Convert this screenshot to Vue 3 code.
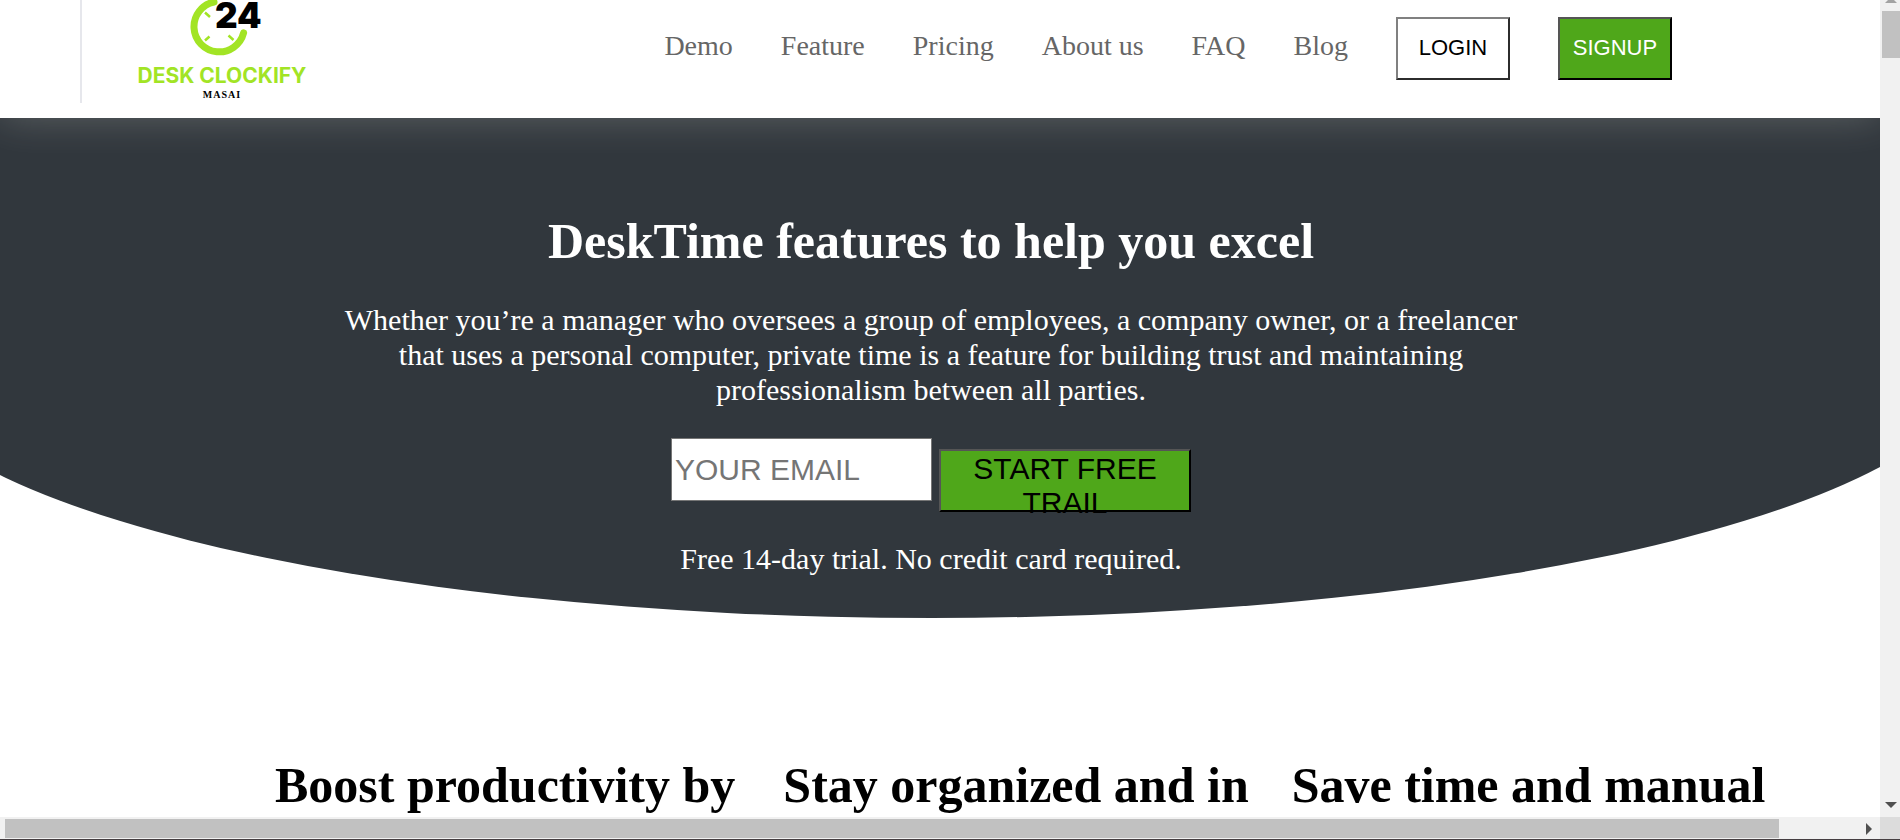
<script setup>
const links = ['Demo', 'Feature', 'Pricing', 'About us', 'FAQ', 'Blog']
const benefits = ['Boost productivity by', 'Stay organized and in', 'Save time and manual']
</script>

<template>
  <div class="window">
    <div class="page">
      <header class="header">
        <a class="brand" href="#" aria-label="Desk Clockify home">
          <svg class="logo" width="230" height="103" viewBox="0 0 230 103">
            <path d="M134 2A25.2 25.2 0 1 0 163.600 32.900" fill="none" stroke="#a2e425" stroke-width="7" stroke-linecap="round" />
            <path d="M125 12.500l5 4.500M129.500 36.500l-4.500 4M148.500 35.500l5 4.500" fill="none" stroke="#a2e425" stroke-width="2.500" />
            <text class="logo-number" x="135" y="28">24</text>
            <text class="logo-name" x="142" y="83" text-anchor="middle">DESK CLOCKIFY</text>
            <text class="logo-sub" x="142" y="98" text-anchor="middle">MASAI</text>
          </svg>
        </a>
        <nav class="nav">
          <a v-for="link in links" :key="link" class="link" href="#">{{ link }}</a>
          <button class="btn login" type="button">LOGIN</button>
          <button class="btn signup" type="button">SIGNUP</button>
        </nav>
      </header>

      <main>
        <section class="hero">
          <h1>DeskTime features to help you excel</h1>
          <p class="lead">
            Whether you’re a manager who oversees a group of employees, a company owner, or a freelancer
            that uses a personal computer, private time is a feature for building trust and maintaining
            professionalism between all parties.
          </p>
          <form class="trial" @submit.prevent>
            <input class="email" type="email" placeholder="YOUR EMAIL" aria-label="Your email" />
            <button class="start" type="submit">START FREE TRAIL</button>
          </form>
          <p class="note">Free 14-day trial. No credit card required.</p>
        </section>

        <section class="benefits">
          <h2 v-for="benefit in benefits" :key="benefit">{{ benefit }}</h2>
        </section>
      </main>
    </div>

    <div class="bar-y" aria-hidden="true">
      <svg class="arrow-up" width="12" height="6" viewBox="0 0 12 6"><path d="M0 6L6 0l6 6z" fill="#a3a3a3" /></svg>
      <div class="thumb-y"></div>
      <svg class="arrow-down" width="12" height="6" viewBox="0 0 12 6"><path d="M0 0h12L6 6z" fill="#505050" /></svg>
    </div>
    <div class="bar-x" aria-hidden="true">
      <div class="thumb-x"></div>
      <svg width="6" height="12" viewBox="0 0 6 12"><path d="M0 0l6 6-6 6z" fill="#505050" /></svg>
    </div>
    <div class="corner"></div>
  </div>
</template>

<style>
body {
  margin: 0;
}
</style>

<style scoped>
.window {
  display: grid;
  grid-template-columns: minmax(0, 1fr) 20px;
  grid-template-rows: minmax(0, 1fr) 22px;
  height: 100vh;
  box-sizing: border-box;
  border-bottom: 1px solid #453e41;
  background: #fff;
  font-family: "Liberation Serif", "Times New Roman", serif;
  overflow: hidden;
}

.page {
  overflow: hidden;
}

.header {
  position: relative;
  z-index: 1;
  display: flex;
  justify-content: space-between;
  align-items: flex-start;
  height: 118px;
  padding: 0 208px 0 80px;
  box-sizing: border-box;
  box-shadow: 0 0 40px rgba(255, 255, 240, 0.22);
}

.brand {
  display: block;
  border-left: 2px solid #e6e7ec;
}

.logo {
  display: block;
  margin-left: -2px;
}

.logo-number {
  font: 900 35px Inter, sans-serif;
}

.logo-name {
  font: 700 21px Inter, sans-serif;
  fill: #a2e425;
}

.logo-sub {
  font: 700 10px "Liberation Serif", serif;
  letter-spacing: 1px;
}

.nav {
  display: flex;
  align-items: baseline;
  gap: 48px;
  padding-top: 17px;
}

.link {
  color: #666;
  font-size: 28px;
  line-height: 32px;
  text-decoration: none;
}

.btn {
  width: 114px;
  height: 63px;
  padding: 0 0 2px;
  border: 2px solid;
  border-radius: 0;
  font: 22px "Liberation Sans", Arial, sans-serif;
}

.login {
  border-color: #808080 #2c2c2c #2c2c2c #808080;
  background: #fff;
  color: #000;
}

.signup {
  border-color: #555 #000 #000 #555;
  background: #4fa71a;
  color: #fff;
}

.hero {
  position: relative;
  min-height: 500px;
  padding: 94px 18px 0 0;
  box-sizing: border-box;
  color: #fff;
  text-align: center;
}

.hero::before {
  content: "";
  position: absolute;
  inset: 0 -5.4% 0 -6.3%;
  border-radius: 0 0 50% 50% / 0 0 53% 53%;
  background: #31373d;
}

.hero > * {
  position: relative;
}

h1,
h2 {
  margin: 0;
  font-size: 50px;
  line-height: 58px;
  font-weight: 700;
}

.lead {
  max-width: 1200px;
  margin: 32px auto 0;
  font-size: 30px;
  line-height: 35px;
}

.trial {
  display: flex;
  justify-content: center;
  align-items: flex-start;
  gap: 7px;
  margin-top: 31px;
}

.email,
.start {
  height: 63px;
  box-sizing: border-box;
  border-radius: 0;
  font: 30px "Liberation Sans", Arial, sans-serif;
}

.email {
  width: 261px;
  padding: 1px 3px;
  border: 1px solid #767676;
  background: #fff;
}

.email::placeholder {
  color: #757575;
  opacity: 1;
}

.start {
  width: 252px;
  margin: 11px 0 0;
  padding: 1px 6px;
  border: 2px solid;
  border-color: #555 #000 #000 #555;
  background: #4fa71a;
  color: #000;
}

.note {
  margin: 29px 0 0;
  font-size: 30px;
  line-height: 35px;
}

.benefits {
  display: grid;
  grid-template-columns: repeat(3, 1fr);
  padding: 138px 80px 0 275px;
  white-space: nowrap;
}

.bar-y {
  display: flex;
  flex-direction: column;
  align-items: center;
  padding: 0 0 9px 2px;
  background: #f1f1f1;
}

.arrow-up {
  margin-top: -3px;
}

.thumb-y {
  align-self: stretch;
  height: 47px;
  margin-top: 8px;
  background: #c1c1c1;
}

.arrow-down {
  margin-top: auto;
}

.bar-x {
  display: flex;
  align-items: center;
  justify-content: space-between;
  padding: 2px 8px 1px 5px;
  background: #f1f1f1;
}

.thumb-x {
  width: 95%;
  height: 19px;
  background: #c1c1c1;
}

.corner {
  background: #dcdcdc;
}
</style>
